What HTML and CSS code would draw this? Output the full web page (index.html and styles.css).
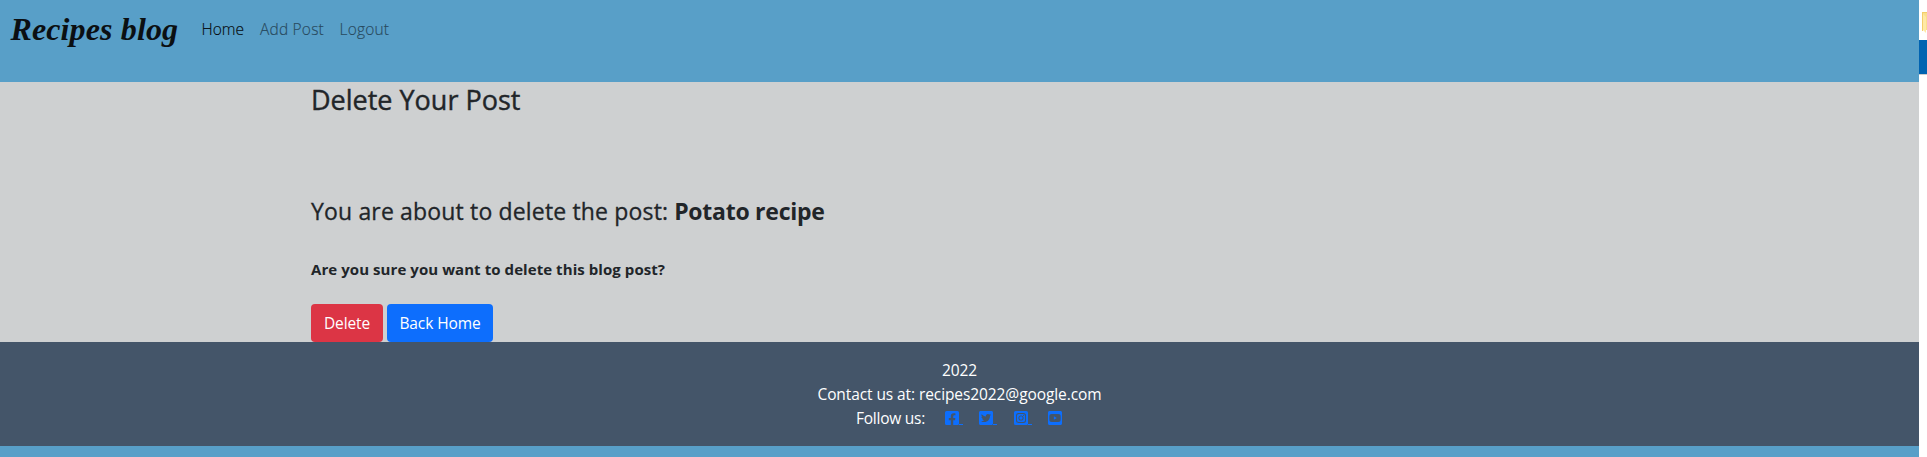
FILE: index.html
```html
<!DOCTYPE html>
<html lang="en">
<head>
<meta charset="utf-8">
<title>Recipes blog</title>
<link rel="stylesheet" href="styles.css">
</head>
<body>
<div class="page">
  <nav class="navbar">
    <a class="brand" href="#">Recipes blog</a>
    <a class="nav-link nav-home" href="#">Home</a>
    <a class="nav-link nav-add" href="#">Add Post</a>
    <a class="nav-link nav-logout" href="#">Logout</a>
  </nav>
  <main class="main">
    <div class="container">
      <h1 class="title">Delete Your Post</h1>
      <h2 class="subtitle"><span class="lead">You are about to delete the post:</span> <strong class="post-name">Potato recipe</strong></h2>
      <p class="confirm">Are you sure you want to delete this blog post?</p>
      <div class="actions">
        <button class="btn btn-danger">Delete</button>
        <a class="btn btn-primary" href="#">Back Home</a>
      </div>
    </div>
  </main>
  <footer class="footer">
    <div class="line year">2022</div>
    <div class="line contact">Contact us at: recipes2022@google.com</div>
    <div class="line follow">
      <span class="follow-label">Follow us:</span>
      <a class="social" href="#"><svg viewBox="0 0 448 512"><path d="M400 32H48A48 48 0 0 0 0 80v352a48 48 0 0 0 48 48h137.250V327.690h-63V256h63v-54.640c0-62.150 37-96.480 93.670-96.480 27.140 0 55.520 4.840 55.520 4.840v61h-31.270c-30.810 0-40.420 19.120-40.420 38.730V256h68.780l-11 71.690h-57.780V480H400a48 48 0 0 0 48-48V80a48 48 0 0 0-48-48z"/></svg></a>
      <a class="social" href="#"><svg viewBox="0 0 448 512"><path d="M400 32H48C21.500 32 0 53.500 0 80v352c0 26.500 21.500 48 48 48h352c26.500 0 48-21.500 48-48V80c0-26.500-21.500-48-48-48zm-48.900 158.800c.2 2.800.2 5.700.2 8.500 0 86.700-66 186.600-186.600 186.600-37.200 0-71.700-10.800-100.700-29.400 5.300.6 10.400.8 15.800.8 30.700 0 58.900-10.400 81.400-28-28.800-.6-53-19.500-61.300-45.500 10.100 1.500 19.200 1.500 29.600-1.200-30-6.100-52.500-32.500-52.500-64.400v-.8c8.700 4.900 18.900 7.900 29.600 8.300a65.447 65.447 0 0 1-29.200-54.600c0-12.200 3.200-23.400 8.900-33.100 32.300 39.800 80.800 65.800 135.200 68.600-9.300-44.500 24-80.600 64-80.600 18.900 0 35.900 7.900 47.900 20.700 14.800-2.800 29-8.300 41.600-15.800-4.900 15.200-15.200 28-28.800 36.100 13.200-1.400 26-5.100 37.800-10.200-8.900 13.100-20.100 24.700-32.900 34z"/></svg></a>
      <a class="social" href="#"><svg viewBox="0 0 448 512"><path fill-rule="evenodd" d="M48 32h352a48 48 0 0 1 48 48v352a48 48 0 0 1-48 48H48a48 48 0 0 1-48-48V80a48 48 0 0 1 48-48zM147 96a82 82 0 0 0-83 83v154a82 82 0 0 0 83 83h154a82 82 0 0 0 83-83V179a82 82 0 0 0-83-83zM152 125h144a60 60 0 0 1 59 59v144a60 60 0 0 1-59 59H152a60 60 0 0 1-59-59V184a60 60 0 0 1 59-59zM224 174a82 82 0 1 0 0 164 82 82 0 0 0 0-164zM224 203a53 53 0 1 1 0 106 53 53 0 0 1 0-106zM309 151a19 19 0 1 0 0 38 19 19 0 0 0 0-38z"/></svg></a>
      <a class="social" href="#"><svg viewBox="0 0 448 512"><path d="M186.800 202.100l95.200 54.100-95.200 54.100V202.100zM448 80v352c0 26.500-21.500 48-48 48H48c-26.500 0-48-21.500-48-48V80c0-26.500 21.500-48 48-48h352c26.500 0 48 21.500 48 48zm-42 176.300s0-59.600-7.600-88.200c-4.200-15.800-16.500-28.200-32.200-32.400C337.900 128 224 128 224 128s-113.900 0-142.200 7.700c-15.700 4.200-28 16.600-32.200 32.400-7.600 28.500-7.600 88.200-7.600 88.200s0 59.600 7.600 88.200c4.200 15.800 16.500 27.700 32.200 31.900C110.100 384 224 384 224 384s113.900 0 142.200-7.700c15.700-4.200 28-16.100 32.200-31.900 7.600-28.500 7.600-88.100 7.600-88.100z"/></svg></a>
    </div>
  </footer>
</div>
<aside class="edge">
  <div class="edge-folder"><svg viewBox="0 0 8 22"><path fill="#fbdf8b" d="M3 0h5v18H3z"/><path fill="#f3ce6b" d="M3 0h5v1H4v18H3z"/><path fill="#ffe9a6" d="M4 2l3 3v16l-3-3z"/></svg></div>
  <div class="edge-bar"></div>
</aside>
</body>
</html>
```
FILE: styles.css
```css
* { box-sizing: border-box; }
body {
  margin: 0;
  height: 457px;
  display: flex;
  overflow: hidden;
  background: #fff;
  color: #212529;
  font: 400 16px/24px "Open Sans", "Noto Sans", sans-serif;
  white-space: nowrap;
}
a { text-decoration: none; }
.page { width: 1919px; background: #589fc8; }
.navbar {
  height: 82px;
  padding: 8px 0 0 10.500px;
  display: flex;
  align-items: flex-start;
}
.brand {
  width: 191px;
  color: #0b0f12;
  font: italic 700 32px/42px "Liberation Serif", serif;
  letter-spacing: 0.12px;
}
.nav-link {
  padding-top: 9px;
  font-weight: 300;
  font-size: 15.500px;
  letter-spacing: 0.2px;
  color: #284a5e;
  -webkit-text-stroke: 0.15px;
}
.nav-home { width: 58.500px; letter-spacing: 0; color: #05090b; }
.nav-add { width: 79.500px; }
.main { height: 260px; background: #ced0d1; }
.container { width: 1320px; margin: 0 auto; padding: 0 11.500px; }
.title {
  margin: 0;
  padding-top: 1px;
  font-size: 27px;
  line-height: 34px;
  font-weight: 500;
  -webkit-text-stroke: 0.4px;
}
.subtitle { margin: 79px 0 0; font-size: 23px; line-height: 30px; font-weight: 500; }
.lead { letter-spacing: 0.16px; -webkit-text-stroke: 0.3px; }
.post-name { font-weight: 700; letter-spacing: -0.26px; }
.confirm { margin: 31px 0 0; font-size: 15px; font-weight: 700; line-height: 24px; letter-spacing: 0.07px; }
.actions { display: flex; gap: 4px; margin-top: 23px; }
.btn {
  width: 72px;
  height: 38px;
  padding: 0;
  border: 0;
  border-radius: 4px;
  color: #fff;
  background: #dc3545;
  font: 400 15.500px/38px "Open Sans", sans-serif;
  letter-spacing: -0.1px;
  text-align: center;
}
.btn-primary { width: 106px; background: #0d6efd; }
.footer {
  height: 104px;
  padding-top: 16px;
  background: #445569;
  color: #fff;
  text-align: center;
  font-size: 15.500px;
  letter-spacing: -0.09px;
}
.line { height: 24px; }
.follow { display: flex; padding-left: 856px; }
.follow-label { width: 89px; text-align: left; letter-spacing: -0.25px; }
.social { display: flex; width: 34.400px; padding-top: 4px; }
.social svg { width: 14px; height: 16px; fill: #0d6efd; }
.social:not(:last-child)::after {
  content: "";
  width: 4px;
  height: 1px;
  margin-top: 14px;
  background: #0d6efd;
}
.edge { width: 8px; }
.edge-folder { height: 40px; padding-top: 12px; }
.edge-folder svg { display: block; width: 8px; height: 22px; }
.edge-bar { height: 35px; background: #0063b1; border-bottom: 1px solid #ccc; }
```
